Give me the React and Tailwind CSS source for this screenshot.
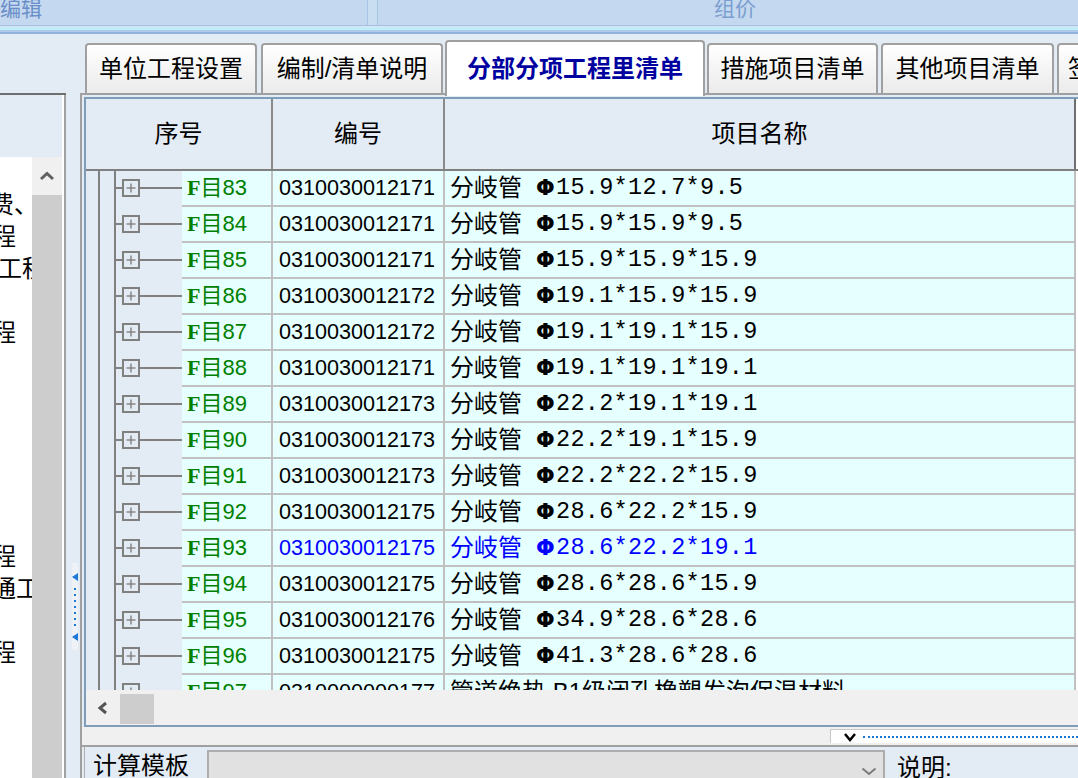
const rows = [
  ["83", "0310030012171", "15.9*12.7*9.5"],
  ["84", "0310030012171", "15.9*15.9*9.5"],
  ["85", "0310030012171", "15.9*15.9*15.9"],
  ["86", "0310030012172", "19.1*15.9*15.9"],
  ["87", "0310030012172", "19.1*19.1*15.9"],
  ["88", "0310030012171", "19.1*19.1*19.1"],
  ["89", "0310030012173", "22.2*19.1*19.1"],
  ["90", "0310030012173", "22.2*19.1*15.9"],
  ["91", "0310030012173", "22.2*22.2*15.9"],
  ["92", "0310030012175", "28.6*22.2*15.9"],
  ["93", "0310030012175", "28.6*22.2*19.1", true],
  ["94", "0310030012175", "28.6*28.6*15.9"],
  ["95", "0310030012176", "34.9*28.6*28.6"],
  ["96", "0310030012175", "41.3*28.6*28.6"],
];

function TreeCell() {
  return (
    <svg width="96" height="36" className="block shrink-0">
      <line x1="13" y1="0" x2="13" y2="36" stroke="#808080" strokeWidth="2" />
      <line x1="29" y1="0" x2="29" y2="36" stroke="#808080" strokeWidth="2" />
      <line x1="30" y1="17" x2="96" y2="17" stroke="#808080" strokeWidth="2" />
      <rect x="37" y="9" width="16" height="16" fill="#e3ebf5" stroke="#808080" strokeWidth="2" />
      <line x1="40.5" y1="17" x2="49.5" y2="17" stroke="#808080" strokeWidth="1.4" />
      <line x1="45" y1="12.5" x2="45" y2="21.5" stroke="#808080" strokeWidth="1.4" />
    </svg>
  );
}

function Row({ n, code, name, spec, hl }) {
  const txt = hl ? "text-[#0000ff]" : "text-black";
  return (
    <div className="flex h-[36px] shrink-0">
      <TreeCell />
      <div className="w-[91px] shrink-0 border-r-2 border-b-2 border-[#c0c0c0] bg-[#e6ffff] flex items-center pl-[5px] text-[#008000] text-[22px] leading-[24px] whitespace-nowrap">
        <span className="font-['Liberation_Serif',serif] font-bold">F</span>
        <span>目</span>
        <span>{n}</span>
      </div>
      <div className={`w-[172px] shrink-0 border-r-2 border-b-2 border-[#c0c0c0] bg-[#e6ffff] flex items-center pl-[6px] text-[21.6px] leading-[24px] whitespace-nowrap ${txt}`}>
        {code}
      </div>
      <div className={`w-[631px] shrink-0 border-r-2 border-b-2 border-[#c0c0c0] bg-[#e6ffff] flex items-center pl-[5px] leading-[24px] whitespace-nowrap overflow-hidden ${txt}`}>
        {name ? (
          <span className="text-[24px]">{name}</span>
        ) : (
          <>
            <span className="text-[24px]">分岐管</span>
            <span className="ml-[14px] w-[20px] shrink-0 text-[22px] font-bold font-['DejaVu_Sans',sans-serif]">Φ</span>
            <span className="text-[23.5px] tracking-[0.3px] font-['Liberation_Mono',monospace]">{spec}</span>
          </>
        )}
      </div>
      <div className="w-[2px] bg-white shrink-0" />
    </div>
  );
}

function Tab({ label, w, ml, active }) {
  if (active) {
    return (
      <div
        className={`${w} ${ml} shrink-0 h-[56px] -mb-[3px] relative z-10 bg-white border-2 border-b-0 border-[#a0a0a0] rounded-t-[4px] flex items-center justify-center text-[24px] font-bold text-[#0000a0] whitespace-nowrap overflow-hidden`}
      >
        {label}
      </div>
    );
  }
  return (
    <div
      className={`${w} ${ml} shrink-0 h-[50px] bg-gradient-to-b from-white to-[#ebebeb] border-2 border-b-0 border-[#a0a0a0] rounded-t-[4px] flex items-center justify-center text-[24px] text-black whitespace-nowrap overflow-hidden`}
    >
      {label}
    </div>
  );
}

export default function App() {
  return (
    <div className="w-[1078px] h-[778px] overflow-hidden bg-[#e3ebf5] flex flex-col font-['Liberation_Sans','Noto_Sans_CJK_SC',sans-serif] text-black">
      {/* top bar */}
      <div className="h-[26px] shrink-0 flex bg-[#c4d9ef] border-b border-[#a3bfe2] overflow-hidden">
        <div className="w-[368px] shrink-0 border-r border-[#aac4e4] text-[21px] leading-[20px] text-[#6a8ec8] -mt-[1px]">编辑</div>
        <div className="w-[10px] shrink-0 bg-[#cadef2] border-r border-[#aac4e4]" />
        <div className="flex-1 flex justify-center pl-[14px] text-[21px] leading-[20px] text-[#7c9fd0] -mt-[1px]">组价</div>
      </div>
      <div className="h-[1px] shrink-0 bg-[#d6e6f6]" />
      <div className="h-[3px] shrink-0 bg-[#c2ecf8]" />
      <div className="h-[2px] shrink-0 bg-[#b0cbea]" />
      <div className="h-[2px] shrink-0 bg-[#93b3dc]" />

      {/* tab strip */}
      <div className="h-[59px] shrink-0 flex items-end pl-[85px] relative z-10 overflow-visible">
        <Tab label="单位工程设置" w="w-[172px]" ml="" />
        <Tab label="编制/清单说明" w="w-[182px]" ml="ml-[4px]" />
        <Tab label="分部分项工程里清单" w="w-[260px]" ml="ml-[2px]" active />
        <Tab label="措施项目清单" w="w-[171px]" ml="ml-[2px]" />
        <Tab label="其他项目清单" w="w-[173px]" ml="ml-[3px]" />
        <div className="ml-[3px] w-[120px] h-[50px] shrink-0 bg-gradient-to-b from-white to-[#ebebeb] border-2 border-b-0 border-[#a0a0a0] rounded-t-[4px] flex items-center pl-[9px] text-[24px] whitespace-nowrap overflow-hidden">
          签证及索赔
        </div>
      </div>

      {/* main */}
      <div className="flex-1 flex min-h-0">
        {/* left panel */}
        <div className="w-[66px] shrink-0 flex border-t-2 border-[#6e6e6e]">
          <div className="w-[62px] flex flex-col">
            <div className="h-[62px] bg-[#e3ebf5]" />
            <div className="flex-1 flex min-h-0">
              <div className="w-[32px] bg-white overflow-hidden text-[24px] leading-[32px] pt-[32px] whitespace-nowrap">
                <div className="-ml-[10px]">费、</div>
                <div className="-ml-[8px]">程</div>
                <div className="-ml-[2px]">工程</div>
                <div className="h-[32px]" />
                <div className="-ml-[8px]">程</div>
                <div className="h-[192px]" />
                <div className="-ml-[8px]">程</div>
                <div className="-ml-[8px]">通工</div>
                <div className="h-[32px]" />
                <div className="-ml-[8px]">程</div>
              </div>
              <div className="w-[30px] flex flex-col">
                <div className="h-[38px] bg-[#f0f0f0] flex items-center justify-center">
                  <svg width="16" height="10" viewBox="0 0 16 10">
                    <path d="M2 8 L8 2.5 L14 8" fill="none" stroke="#606060" strokeWidth="3" />
                  </svg>
                </div>
                <div className="flex-1 bg-[#cdcdcd]" />
              </div>
            </div>
          </div>
          <div className="w-[2px] bg-white" />
          <div className="w-[2px] bg-[#a0a0a0]" />
        </div>

        {/* splitter */}
        <div className="w-[14px] shrink-0 pt-[470px]">
          <div className="ml-[6px] w-[6px] h-[87px] bg-[#eef1f5]">
            <svg width="6" height="87" viewBox="0 0 6 87" className="block">
              <path d="M0 14 L6 10 L6 18 Z" fill="#1e78d7" />
              <path d="M0 74 L6 70 L6 78 Z" fill="#1e78d7" />
              {[25, 31, 37, 43, 49, 55, 61].map((y) => (
                <rect key={y} x="2" y={y} width="2" height="2" fill="#1e78d7" />
              ))}
            </svg>
          </div>
        </div>

        {/* tab page */}
        <div className="flex-1 flex flex-col border-l-2 border-t-2 border-[#a0a0a0] min-w-0">
          <div className="pl-[2px] pt-[2px]">
            <div className="w-[994px] h-[630px] border-l-2 border-t-2 border-b-2 border-[#7f9db9] flex flex-col bg-[#e3ebf5]">
              {/* header */}
              <div className="h-[72px] shrink-0 flex border-b-2 border-[#808080] text-[24px]">
                <div className="w-[187px] shrink-0 border-r-2 border-[#8a8a8a] flex items-center justify-center">序号</div>
                <div className="w-[172px] shrink-0 border-r-2 border-[#8a8a8a] flex items-center justify-center">编号</div>
                <div className="w-[631px] shrink-0 border-r-2 border-[#6e6e6e] flex items-center justify-center">项目名称</div>
                <div className="w-[2px] shrink-0 bg-white" />
              </div>
              {/* rows */}
              <div className="h-[519px] shrink-0 overflow-hidden flex flex-col">
                {rows.map(([n, code, spec, hl]) => (
                  <Row key={n} n={n} code={code} spec={spec} hl={hl} />
                ))}
                <Row n="97" code="0310000000177" name="管道绝热 B1级闭孔橡塑发泡保温材料" />
              </div>
              {/* h scroll */}
              <div className="h-[35px] shrink-0 bg-[#f0f0f0] flex items-center">
                <div className="w-[34px] flex items-center justify-center">
                  <svg width="12" height="14" viewBox="0 0 12 14">
                    <path d="M9 2 L3 7 L9 12" fill="none" stroke="#555" strokeWidth="3" />
                  </svg>
                </div>
                <div className="w-[34px] h-[30px] mt-[2px] bg-[#cdcdcd]" />
              </div>
            </div>
          </div>
          {/* lower splitter strip */}
          <div className="h-[18px] shrink-0 bg-[#f0f0f0] flex">
            <div className="ml-auto w-[248px] mt-[2px] h-[14px] bg-white border-t border-l border-[#c8c8c8] flex items-center">
              <svg width="14" height="10" viewBox="0 0 14 10" className="ml-[12px] shrink-0">
                <path d="M2 2 L7 8 L12 2" fill="none" stroke="#000" strokeWidth="2.5" />
              </svg>
              <div className="ml-[6px] flex-1 border-t-2 border-dotted border-[#1e78d7]" />
            </div>
          </div>
          <div className="h-[2px] shrink-0 bg-[#a0a0a0]" />
          {/* bottom panel */}
          <div className="flex-1 flex min-h-0 bg-[#e3ebf5] pl-[2px]">
            <div className="w-[123px] shrink-0 border-l border-[#b0b0b0] pl-[8px] pt-[4px] text-[24px] leading-[30px] whitespace-nowrap">计算模板</div>
            <div className="w-[678px] shrink-0 mt-[3px] bg-[#e1e1e1] border-2 border-b-0 border-[#adadad] flex justify-end items-start pr-[6px] pt-[15px]">
              <svg width="16" height="9" viewBox="0 0 16 9">
                <path d="M1.5 1.5 L8 7 L14.5 1.5" fill="none" stroke="#7a7a7a" strokeWidth="2" />
              </svg>
            </div>
            <div className="flex-1 pl-[12px] pt-[6px] text-[24px] leading-[30px] whitespace-nowrap">说明:</div>
          </div>
        </div>
      </div>
    </div>
  );
}
